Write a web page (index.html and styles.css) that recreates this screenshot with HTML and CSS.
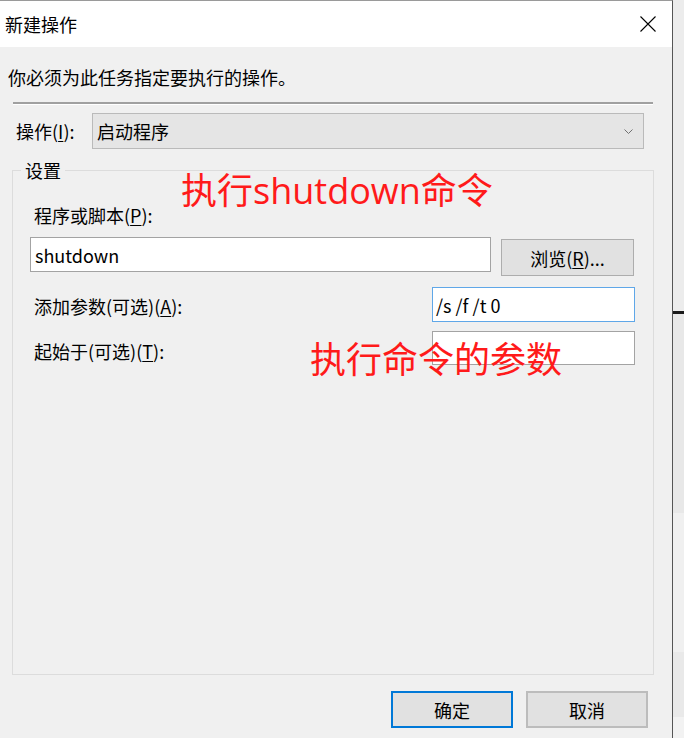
FILE: index.html
```html
<!DOCTYPE html>
<html lang="zh-CN">
<head>
<meta charset="utf-8">
<title>新建操作</title>
<link rel="stylesheet" href="styles.css">
</head>
<body>
<div class="screen">
  <div class="window">
    <div class="titlebar">
      <span class="title">新建操作</span>
      <svg class="close" width="16" height="16" viewBox="0 0 16 16"><path d="M0.5 0.5L15.5 15.5M15.5 0.5L0.5 15.5" stroke="#000" stroke-width="1.1" fill="none"/></svg>
    </div>
    <div class="content">
      <p class="intro">你必须为此任务指定要执行的操作。</p>
      <div class="sep"></div>
      <div class="action-row">
        <span class="action-label">操作(<u>I</u>):</span>
        <div class="combo"><span>启动程序</span><svg class="chev" width="9" height="5" viewBox="0 0 9 5"><path d="M0.5 0.5L4.5 4.5L8.5 0.5" stroke="#707070" stroke-width="1" fill="none"/></svg></div>
      </div>
      <fieldset class="group">
        <legend>设置</legend>
        <div class="field-label">程序或脚本(<u>P</u>):</div>
        <div class="prog-row">
          <div class="textbox prog">shutdown</div>
          <div class="button browse">浏览(<u>R</u>)...</div>
        </div>
        <div class="opt-row args-row">
          <span class="opt-label">添加参数(可选)(<u>A</u>):</span>
          <div class="textbox small focused">/s /f /t 0</div>
        </div>
        <div class="opt-row start-row">
          <span class="opt-label">起始于(可选)(<u>T</u>):</span>
          <div class="textbox small start"></div>
        </div>
      </fieldset>
      <div class="buttons">
        <div class="button default">确定</div>
        <div class="button">取消</div>
      </div>
    </div>
    <div class="note note1">执行shutdown命令</div>
    <div class="note note2">执行命令的参数</div>
  </div>
  <div class="outside">
    <div class="strip s1"></div>
    <div class="strip s2"></div>
    <div class="strip s3"></div>
    <div class="strip s4"></div>
    <div class="strip s5"></div>
    <div class="strip s6"></div>
  </div>
</div>
</body>
</html>
```

FILE: styles.css
```css
* { box-sizing: border-box; }
html, body { margin: 0; padding: 0; }
body {
  font-family: "Noto Sans CJK SC", "Noto Sans", sans-serif;
  font-size: 18px;
  line-height: 24px;
  color: #000;
  background: #f0f0f0;
}
u { text-decoration-thickness: 1px; text-underline-offset: 2px; }

.screen { display: flex; width: 684px; height: 738px; overflow: hidden; }

.window {
  position: relative;
  flex: none;
  width: 673px;
  display: flex;
  flex-direction: column;
  border-top: 1px solid #9a9a9a;
  border-right: 1px solid #555;
  background: #f0f0f0;
}

.titlebar {
  flex: none;
  height: 46px;
  background: #fff;
  display: flex;
  align-items: center;
  justify-content: space-between;
  padding: 0 16px 0 5px;
}
.close { display: block; }

.content { flex: 1; display: flex; flex-direction: column; min-height: 0; }

.intro { margin: 18px 0 0 8px; }

.sep {
  margin: 13px 19px 0 13px;
  height: 3px;
  border-top: 2px solid #a0a0a0;
  border-bottom: 1px solid #fff;
}

.action-row {
  display: flex;
  align-items: center;
  margin-top: 8px;
  padding: 0 28px 0 16px;
}
.action-label { width: 76px; flex: none; }
.combo {
  flex: 1;
  height: 36px;
  background: #e5e5e5;
  border: 1px solid #bababa;
  display: flex;
  align-items: center;
  justify-content: space-between;
  padding: 0 10px 0 4px;
}
.chev { display: block; }

.group {
  flex: 1;
  min-width: 0;
  margin: 9px 18px 0 12px;
  padding: 21px 0 0 0;
  border: 1px solid #dcdcdc;
}
.group legend {
  margin-left: 8px;
  padding: 0 4px;
  line-height: 24px;
}

.field-label { padding-left: 21px; }

.prog-row {
  display: flex;
  align-items: flex-start;
  margin-top: 10px;
  padding-left: 17px;
}

.textbox {
  height: 35px;
  background: #fff;
  border: 1px solid #a3a3a3;
  display: flex;
  align-items: center;
  padding-left: 4px;
}
.prog { width: 461px; }
.small { width: 203px; padding-left: 3px; }
.start { height: 34px; }
.focused { border-color: #5fa7e8; }

.button {
  display: flex;
  align-items: center;
  justify-content: center;
  background: #e1e1e1;
  border: 2px solid #bcbcbc;
}
.browse { margin: 2px 0 0 10px; width: 133px; height: 37px; border-width: 1px; border-color: #adadad; }

.opt-row {
  display: flex;
  justify-content: space-between;
  align-items: flex-start;
  padding: 0 18px 0 21px;
}
.args-row { margin-top: 11px; }
.args-row .opt-label { margin-top: 7px; }
.start-row { margin-top: 9px; }
.start-row .opt-label { margin-top: 8px; }

.buttons {
  flex: none;
  display: flex;
  justify-content: flex-end;
  gap: 13px;
  padding-right: 24px;
  margin: 16px 0 10px;
}
.buttons .button { width: 122px; height: 37px; }
.buttons .default { border-color: #0078d7; }

.note {
  position: absolute;
  font-family: "Open Sans", "Noto Sans CJK SC", sans-serif;
  font-size: 36px;
  line-height: 36px;
  color: #ff1a1a;
  white-space: nowrap;
}
.note1 { top: 172px; left: 181px; }
.note2 { top: 341px; left: 310px; }

.outside { flex: 1; display: flex; flex-direction: column; }
.strip { flex: none; }
.s1 { height: 311px; background: #ececec; }
.s2 { height: 3px; background: #1a1a1a; }
.s3 { height: 199px; background: #e8e8e8; }
.s4 { height: 139px; background: #f0f0f0; }
.s5 { height: 65px; background: #e9e9e9; }
.s6 { height: 21px; background: #f2f2f2; }
```
